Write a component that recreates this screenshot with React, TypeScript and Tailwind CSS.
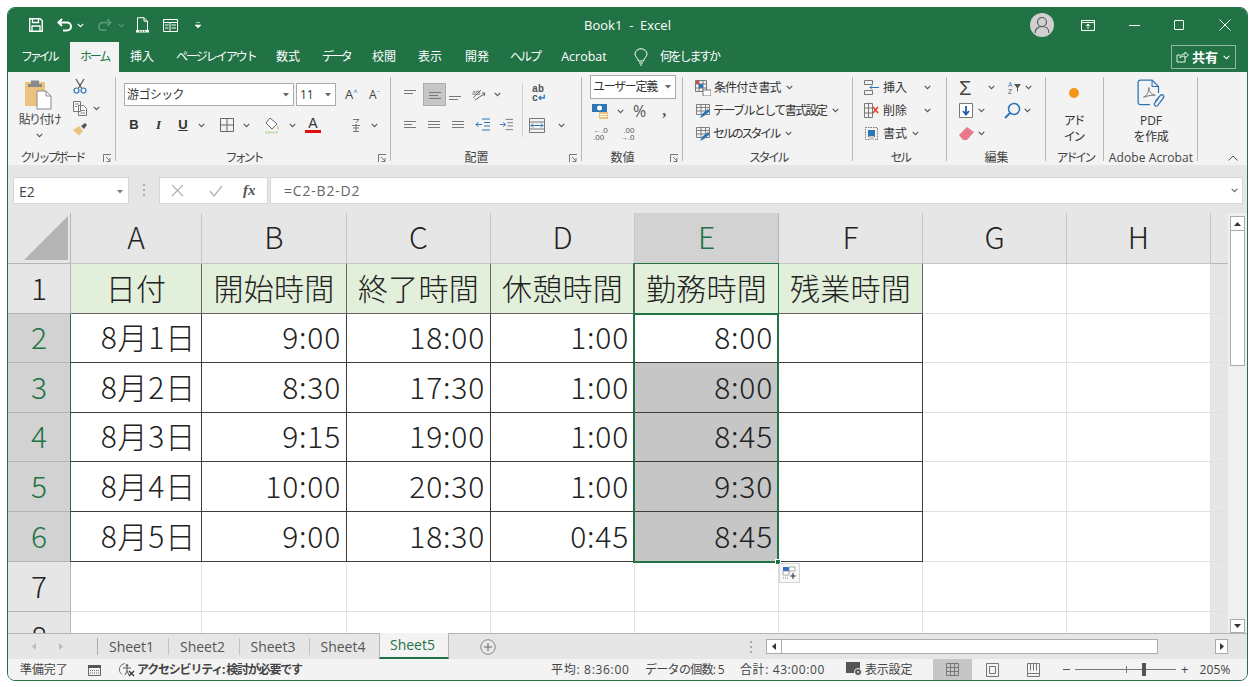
import type { ReactNode } from "react";

const Caret = ({ c = "#555", className = "" }: { c?: string; className?: string }) => (
  <svg width="7" height="5" viewBox="0 0 7 5" className={className}>
    <path d="M.7.8 3.5 3.6 6.3.8" fill="none" stroke={c} strokeWidth="1.1" />
  </svg>
);

const Launcher = () => (
  <svg width="9" height="9" viewBox="0 0 9 9">
    <path d="M.5 8V.5H8M3 3l4 4M7 4v3.5H3.5" fill="none" stroke="#777" strokeWidth="1" />
  </svg>
);

// small ribbon lines icon (alignment)
const Lines = ({ y, w = [12, 9, 12] }: { y: number[]; w?: number[] }) => (
  <svg width="14" height="14" viewBox="0 0 14 14">
    {y.map((v, i) => (
      <path key={i} d={`M1 ${v}.5h${w[i]}`} stroke="#777" strokeWidth="1" />
    ))}
  </svg>
);

const SheetIcon = ({ accent }: { accent: string }) => (
  <svg width="17" height="16" viewBox="0 0 17 16">
    <path d="M1.500 1.500h13v10h-13zM1.500 4.500h13M1.500 8h13M6 1.500v10M10.500 1.500v10" fill="none" stroke="#808080" />
    <path d="M5 15l2-4 6-5 2 2-6 5z" fill={accent} />
  </svg>
);

function Group({ w, label, launcher, track = "tracking-[-0.6px]", children }: { w: string; label: string; launcher?: boolean; track?: string; children: ReactNode }) {
  return (
    <div className={`${w} relative flex h-full shrink-0 flex-col`}>
      <div className="absolute right-0 top-[5px] h-[84px] w-px bg-[#b9b9b9]" />
      <div className="h-[76px] overflow-visible">{children}</div>
      <div className={`${track} ${launcher ? "pr-[20px]" : ""} relative mt-auto h-[17px] whitespace-nowrap text-center text-[12px] leading-[19px] text-[#444]`}>
        {label}
        {launcher && (
          <span className="absolute bottom-[2px] right-[4px] flex">
            <Launcher />
          </span>
        )}
      </div>
    </div>
  );
}

function Slot({ w, children }: { w: string; children: ReactNode }) {
  return <span className={`${w} flex shrink-0 items-center justify-center`}>{children}</span>;
}

const Sep = () => <span className="mx-[1px] h-[24px] w-px shrink-0 bg-[#c6c6c6]" />;

const tabs: [string, string][] = [
  ["挿入", "w-[24px] ml-[11px]"],
  ["ページレイアウト", "w-[78px] ml-[22px] tracking-[-2px]"],
  ["数式", "w-[24px] ml-[22px]"],
  ["データ", "w-[28px] ml-[22px] tracking-[-2.6px]"],
  ["校閲", "w-[24px] ml-[22px]"],
  ["表示", "w-[24px] ml-[22px]"],
  ["開発", "w-[24px] ml-[23px]"],
  ["ヘルプ", "w-[30px] ml-[21px] tracking-[-2px]"],
  ["Acrobat", "w-[46px] ml-[21px] text-[12.5px]"],
];

const rows = [
  ["8月1日", "9:00", "18:00", "1:00", "8:00"],
  ["8月2日", "8:30", "17:30", "1:00", "8:00"],
  ["8月3日", "9:15", "19:00", "1:00", "8:45"],
  ["8月4日", "10:00", "20:30", "1:00", "9:30"],
  ["8月5日", "9:00", "18:30", "0:45", "8:45"],
];

const colLabels = ["A", "B", "C", "D", "E", "F", "G", "H"];
const titles = ["日付", "開始時間", "終了時間", "休憩時間", "勤務時間", "残業時間"];

function Gridline() {
  return <div className="border-b border-r border-[#e1e1e1] bg-white" />;
}

function Sheet() {
  return (
    <div className="relative h-[420px] w-[1220px] shrink-0 overflow-hidden font-['Noto_Sans_CJK_JP',sans-serif] text-[30px] font-light leading-none text-[#222]">
      <div className="grid grid-cols-[63px_131px_145px_144px_144px_144px_144px_144px_144px_17px] grid-rows-[51px_50px_49px_50px_49px_50px_50px_50px_50px]">
        {/* column headers */}
        <div className="flex items-end justify-end border-b border-r border-[#b5b5b5] bg-[#e6e6e6] pb-[3px] pr-[2px]">
          <svg width="44" height="44" viewBox="0 0 44 44">
            <path d="M44 0v44H0z" fill="#b4b4b4" />
          </svg>
        </div>
        {colLabels.map((c) => (
          <div
            key={c}
            className={
              c === "E"
                ? "flex items-center justify-center border-b border-r border-[#b5b5b5] bg-[#d2d2d2] pb-[4px] text-[#217346]"
                : "flex items-center justify-center border-b border-r border-[#c6c6c6] bg-[#e6e6e6] pb-[4px]"
            }
          >
            {c}
          </div>
        ))}
        <div className="border-b border-[#b5b5b5] bg-[#e6e6e6]" />

        {/* row 1 */}
        <div className="flex items-center justify-center border-b border-r border-[#b5b5b5] bg-[#e6e6e6] pb-[4px]">1</div>
        {titles.map((t, i) => (
          <div
            key={t}
            className={
              i === 4
                ? "flex items-center justify-center border-b border-r border-[#217346] bg-[#e2efda] pb-[4px] tracking-[0.2px]"
                : "flex items-center justify-center border-b border-r border-[#666] bg-[#e2efda] pb-[4px] tracking-[0.2px]"
            }
          >
            {t}
          </div>
        ))}
        <Gridline />
        <Gridline />
        <div className="border-b border-[#e1e1e1]" />

        {/* rows 2-6 */}
        {rows.flatMap((r, ri) => [
          <div key={`h${ri}`} className="flex items-center justify-center border-b border-r border-[#b5b5b5] bg-[#d2d2d2] pb-[4px] text-[#217346]">
            {ri + 2}
          </div>,
          ...r.map((v, ci) => (
            <div
              key={`${ri}-${ci}`}
              className={
                ci === 4 && ri > 0
                  ? "flex items-center justify-end border-b border-r border-[#3c3c3c] bg-[#c6c6c6] pb-[4px] pr-[5px] tracking-[0.8px]"
                  : "flex items-center justify-end border-b border-r border-[#3c3c3c] bg-white pb-[4px] pr-[5px] tracking-[0.8px]"
              }
            >
              {v}
            </div>
          )),
          <div key={`f${ri}`} className="border-b border-r border-[#3c3c3c] bg-white" />,
          <Gridline key={`g${ri}`} />,
          <Gridline key={`i${ri}`} />,
          <div key={`j${ri}`} className="border-b border-[#e1e1e1]" />,
        ])}

        {/* rows 7, 8 */}
        {[7, 8].flatMap((n) => [
          <div key={`h${n}`} className="flex items-center justify-center border-b border-r border-[#b5b5b5] bg-[#e6e6e6] pb-[4px]">
            {n}
          </div>,
          ...Array.from({ length: 8 }, (_, i) => <Gridline key={`${n}-${i}`} />),
          <div key={`l${n}`} className="border-b border-[#e1e1e1]" />,
        ])}
      </div>

      {/* left edge of the filled area */}
      <div className="pointer-events-none absolute left-[62px] top-[101px] h-[248px] w-[1px] bg-[#217346]" />
      {/* selection E2:E6 */}
      <div className="pointer-events-none absolute left-[625px] top-[100px] h-[250px] w-[146px] border-2 border-[#217346]" />
      <div className="pointer-events-none absolute left-[625px] top-[50px] h-[51px] w-[146px] border-x border-t border-[#217346]" />
      <div className="absolute left-[767px] top-[346px] h-[6px] w-[6px] border border-white bg-[#217346]" />
      {/* quick analysis */}
      <div className="absolute left-[771px] top-[350px] flex h-[20px] w-[21px] items-center justify-center border border-[#d4d4d4] bg-[#f8f8f8]">
        <svg width="15" height="14" viewBox="0 0 15 14">
          <path d="M1 1h6v4H1z" fill="#2f6fd0" />
          <path d="M7 1h6v4H7zM1 5h6v4H1z" fill="#fff" stroke="#888" strokeWidth=".7" />
          <path d="M1 12h5" stroke="#888" strokeDasharray="1 1" />
          <path d="M11 7v6M8.500 10h5" stroke="#555" strokeWidth="1.300" />
        </svg>
      </div>
    </div>
  );
}

export default function App() {
  return (
    <div className="h-[687px] w-[1255px] overflow-hidden bg-white p-[7px] font-['Open_Sans','Noto_Sans_CJK_JP',sans-serif] text-[#444]">
      <div className="flex h-[674px] w-[1241px] flex-col overflow-hidden rounded-lg border border-[#217346] bg-[#e6e6e6]">
        {/* title bar */}
        <div className="grid h-[34px] shrink-0 grid-cols-[1fr_auto_1fr] items-center bg-[#217346] text-white">
          <div className="flex items-center pl-[21px]">
            <svg width="14" height="14" viewBox="0 0 14 14">
              <path d="M.7.7h10.500l2.100 2.100v10.500H.7z" fill="none" stroke="#fff" strokeWidth="1.400" />
              <path d="M3.500 1v3.500h6V1M3 13V8h8v5" fill="none" stroke="#fff" strokeWidth="1.300" />
            </svg>
            <svg width="16" height="14" viewBox="0 0 16 14" className="ml-[14px]">
              <path d="M1.500 4.500H10a4 4 0 0 1 0 8H6M5 1 1.500 4.500 5 8" fill="none" stroke="#fff" strokeWidth="2" />
            </svg>
            <Caret c="#fff" className="ml-[4px]" />
            <svg width="15" height="14" viewBox="0 0 16 14" className="ml-[13px]">
              <path d="M14.500 4.500H6a4 4 0 0 0 0 8h4M11 1l3.500 3.500L11 8" fill="none" stroke="#5a9678" strokeWidth="2" />
            </svg>
            <Caret c="#5a9678" className="ml-[6px]" />
            <svg width="13" height="16" viewBox="0 0 13 16" className="ml-[11px]">
              <path d="M1.500 13V.7h6.500l3.500 3.500V13M8 .7v3.500h3.500" fill="none" stroke="#fff" />
              <path d="M0 13h13v2.500H0z" fill="#fff" />
              <path d="M3 14.200h7" stroke="#217346" strokeDasharray="1.500 1" />
            </svg>
            <svg width="15" height="13" viewBox="0 0 15 13" className="ml-[14px]">
              <path d="M.5.500h14v12H.5zM.5 3.500h14M7 3.500v9M2 6h3.500M2 9h3.500M8.500 6h4.500M8.500 9h4.500" fill="none" stroke="#fff" />
            </svg>
            <svg width="6" height="7" viewBox="0 0 6 7" className="ml-[17px]">
              <path d="M1 .5h4M0 3l3 3 3-3z" fill="#fff" stroke="#fff" strokeWidth=".6" />
            </svg>
          </div>
          <div className="text-[13px] leading-none">Book1&nbsp; -&nbsp; Excel</div>
          <div className="flex items-center justify-end">
            <div className="flex h-[24px] w-[24px] items-center justify-center rounded-full bg-[#d0d0d0]">
              <svg width="16" height="18" viewBox="0 0 16 18">
                <circle cx="8" cy="6" r="4.500" fill="none" stroke="#555" strokeWidth="1.100" />
                <path d="M1 17c0-4 3-6.500 7-6.500s7 2.500 7 6.500" fill="none" stroke="#555" strokeWidth="1.100" />
              </svg>
            </div>
            <svg width="14" height="11" viewBox="0 0 14 11" className="ml-[27px]">
              <path d="M.5.500h13v10H.5zM.5 2.500h13M7 9V4.500M5 6l2-2 2 2" fill="none" stroke="#fff" />
            </svg>
            <div className="ml-[34px] h-px w-[11px] bg-white" />
            <div className="ml-[34px] h-[10px] w-[10px] rounded-[1px] border border-white" />
            <svg width="12" height="12" viewBox="0 0 12 12" className="ml-[35px] mr-[16px]">
              <path d="M.5.500l11 11M11.500.500l-11 11" stroke="#fff" />
            </svg>
          </div>
        </div>

        {/* ribbon tabs */}
        <div className="flex h-[30px] shrink-0 items-center bg-[#217346] text-[12px] leading-none text-white">
          <span className="ml-[13px] w-[34px] whitespace-nowrap text-center tracking-[-3.2px]">ファイル</span>
          <span className="ml-[15px] flex h-full w-[49px] items-center justify-center bg-[#f3f3f3] tracking-[-2.2px] text-[#217346]">ホーム</span>
          {tabs.map(([t, c]) => (
            <span key={t} className={`${c} whitespace-nowrap text-center`}>
              {t}
            </span>
          ))}
          <svg width="14" height="18" viewBox="0 0 14 18" className="ml-[27px]">
            <path d="M4.500 13C4 10 1 9 1 5.800A5.800 5.800 0 0 1 7 .8a5.800 5.800 0 0 1 6 5c0 3.200-3 4.200-3.500 7.200zM5 15h4M6 17h2" fill="none" stroke="#fff" />
          </svg>
          <span className="ml-[12px] whitespace-nowrap tracking-[-2.2px]">何をしますか</span>
          <div className="ml-auto mr-[11px] flex h-[24px] w-[65px] items-center border border-[#8fb9a3] pl-[4px]">
            <svg width="13" height="12" viewBox="0 0 13 12">
              <path d="M9 6.500V11H1V4h3M4 7c0-3 2-4 5-4V1l3.500 3L9 7V5C7 5 5 5.500 4 7z" fill="none" stroke="#fff" strokeWidth=".9" />
            </svg>
            <span className="ml-[3px] text-[13px] font-bold">共有</span>
            <Caret c="#fff" className="ml-[5px]" />
          </div>
        </div>

        {/* ribbon */}
        <div className="flex h-[93px] shrink-0 bg-[#f3f3f3]">
          <Group w="w-[108px]" label="クリップボード" launcher track="tracking-[-3px]">
            <div className="flex">
              <div className="flex w-[63px] flex-col items-center pt-[7px]">
                <svg width="28" height="31" viewBox="0 0 28 31" className="ml-[-4px]">
                  <path d="M1 3h20v24H1z" fill="#ecc27f" />
                  <path d="M7 1.500h8V5h3v3H4V5h3z" fill="#8a8a8a" />
                  <path d="M13 12h9l5 5v13H13z" fill="#fff" stroke="#8a8a8a" />
                  <path d="M22 12v5h5" fill="none" stroke="#8a8a8a" />
                </svg>
                <span className="mt-[1px] whitespace-nowrap text-[12px] leading-[18px] tracking-[-1.6px]">貼り付け</span>
                <Caret className="mt-[4px]" />
              </div>
              <div className="flex flex-col items-center pt-[6px]">
                <svg width="14" height="16" viewBox="0 0 14 16">
                  <path d="M3 1l5.500 9M11 1 5.500 10" stroke="#555" strokeWidth="1.200" />
                  <circle cx="3.500" cy="12.500" r="2.500" fill="none" stroke="#2e75b6" strokeWidth="1.200" />
                  <circle cx="10.500" cy="12.500" r="2.500" fill="none" stroke="#2e75b6" strokeWidth="1.200" />
                </svg>
                <div className="relative mt-[7px] flex w-[14px]">
                  <svg width="14" height="15" viewBox="0 0 14 15">
                    <path d="M.5.500h7v10h-7zM5.500 4.500h5l3 3v7h-8z" fill="#f8f8f8" stroke="#777" />
                    <path d="M2 3h4M2 5.500h2M7.500 9.500h4.500M7.500 12h4.500" stroke="#888" />
                  </svg>
                  <Caret className="absolute left-[20px] top-[5px]" />
                </div>
                <svg width="15" height="14" viewBox="0 0 15 14" className="ml-[2px] mt-[6px]">
                  <path d="M0 8l6-4 4 5-4 4.500z" fill="#ecc27f" />
                  <path d="M8 4l4-3 2 2-3 4z" fill="#555" />
                </svg>
              </div>
            </div>
          </Group>

          <Group w="w-[275px]" label="フォント" launcher track="tracking-[-3px]">
            <div className="flex items-center pl-[8px] pt-[11px]">
              <div className="flex h-[23px] w-[170px] items-center border border-[#ababab] bg-white pl-[2px] text-[12px] tracking-[-0.6px] text-[#333]">
                游ゴシック
                <svg width="6" height="4" viewBox="0 0 6 4" className="ml-auto mr-[4px]">
                  <path d="M0 0h6L3 3.500z" fill="#666" />
                </svg>
              </div>
              <div className="ml-[2px] flex h-[23px] w-[40px] items-center border border-[#ababab] bg-white pl-[3px] text-[12px] text-[#333]">
                11
                <svg width="6" height="4" viewBox="0 0 6 4" className="ml-auto mr-[4px]">
                  <path d="M0 0h6L3 3.500z" fill="#666" />
                </svg>
              </div>
              <span className="ml-[8px] flex w-[15px] justify-center text-[13px] leading-none">
                A<span className="text-[8px] text-[#2e75b6]">^</span>
              </span>
              <span className="ml-[8px] flex w-[15px] justify-center text-[12px] leading-none">
                A<span className="text-[8px] text-[#2e75b6]">ˇ</span>
              </span>
            </div>
            <div className="mt-[7px] flex h-[24px] items-center pl-[6px] text-[13px] text-[#333]">
              <Slot w="w-[24px]"><b className="font-['Liberation_Sans']">B</b></Slot>
              <Slot w="w-[25px]"><i className="font-['Liberation_Serif'] font-bold">I</i></Slot>
              <Slot w="w-[24px]"><b className="font-['Liberation_Sans'] underline">U</b></Slot>
              <Slot w="w-[12px]"><Caret /></Slot>
              <span className="ml-[4px]"><Sep /></span>
              <Slot w="w-[28px]">
                <svg width="14" height="14" viewBox="0 0 14 14">
                  <path d="M.5.500h13v13H.5zM7 .5v13M.5 7h13" fill="none" stroke="#666" />
                </svg>
              </Slot>
              <Slot w="w-[10px]"><Caret /></Slot>
              <span className="ml-[2px]"><Sep /></span>
              <Slot w="w-[33px]">
                <svg width="16" height="17" viewBox="0 0 16 17">
                  <path d="M6 1l7 6-5 5-6-6z" fill="#fff" stroke="#666" />
                  <path d="M13 8c1 1.500 2 2.500 2 3.500s-2 1-2 0z" fill="#ecc27f" />
                  <path d="M1 15.500h13" stroke="#c6dfb8" strokeWidth="2" />
                </svg>
              </Slot>
              <Slot w="w-[8px]"><Caret /></Slot>
              <Slot w="w-[34px]">
                <span className="flex flex-col items-center font-['Liberation_Sans'] text-[14px] leading-[13px]">
                  A<span className="h-[3px] w-[16px] bg-[#e01010]" />
                </span>
              </Slot>
              <Slot w="w-[1px]"><Caret /></Slot>
              <span className="ml-[9px]"><Sep /></span>
              <Slot w="w-[28px]">
                <svg width="10" height="15" viewBox="0 0 10 15">
                  <path d="M2 1.500h6L5 5M1 7.500h8M5 6v8M2 10h6M2 13.500h6" fill="none" stroke="#666" strokeWidth=".9" />
                </svg>
              </Slot>
              <Slot w="w-[8px]"><Caret /></Slot>
            </div>
          </Group>

          <Group w="w-[191px]" label="配置" launcher track="tracking-[0px]">
            <div className="flex">
              <div className="w-[131px]">
                <div className="mt-[11px] flex h-[23px] items-center pl-[11px]">
                  <Slot w="w-[16px]"><Lines y={[2, 5]} /></Slot>
                  <span className="ml-[5px] flex h-[23px] w-[23px] items-center justify-center border border-[#ababab] bg-[#c6c6c6]"><Lines y={[4, 7, 10]} /></span>
                  <Slot w="w-[18px]"><Lines y={[8, 11]} /></Slot>
                  <Slot w="w-[30px]">
                    <svg width="16" height="14" viewBox="0 0 16 14">
                      <path d="M2 10 10 2" stroke="#777" strokeWidth="1" />
                      <text x="1" y="7" fontSize="7" fill="#666">ab</text>
                      <path d="M4 12l9-6M11 5l3 0-1 3" fill="none" stroke="#666" />
                    </svg>
                  </Slot>
                  <Caret />
                </div>
                <div className="mt-[7px] flex h-[24px] items-center pl-[12px]">
                  <Slot w="w-[14px]"><Lines y={[3, 6, 9]} w={[12, 8, 12]} /></Slot>
                  <Slot w="w-[34px]"><Lines y={[3, 6, 9]} w={[12, 12, 12]} /></Slot>
                  <Slot w="w-[14px]"><Lines y={[3, 6, 9]} w={[12, 12, 12]} /></Slot>
                  <Slot w="w-[34px]">
                    <svg width="15" height="14" viewBox="0 0 15 14">
                      <path d="M7 1h8M9 4.500h6M9 8h6M7 12h8M1 6.500h6M3.500 4 1 6.500 3.500 9" fill="none" stroke="#2e75b6" />
                    </svg>
                  </Slot>
                  <Slot w="w-[14px]">
                    <svg width="15" height="14" viewBox="0 0 15 14">
                      <path d="M7 1h8M9 4.500h6M9 8h6M7 12h8" fill="none" stroke="#777" />
                      <path d="M1 6.500h6M4.500 4 7 6.500 4.500 9" fill="none" stroke="#2e75b6" />
                    </svg>
                  </Slot>
                </div>
              </div>
              <div className="mt-[11px] h-[54px] w-px bg-[#d0d0d0]" />
              <div className="flex w-[57px] flex-col pl-[6px]">
                <span className="ml-[3px] mt-[13px] font-['Liberation_Mono'] text-[10px] font-bold leading-[9px] text-[#555]">
                  ab
                  <br />
                  c<span className="text-[#2e75b6]">↵</span>
                </span>
                <div className="mt-[15px] flex items-center">
                  <svg width="16" height="15" viewBox="0 0 16 15">
                    <path d="M.5.500h15v14H.5zM.5 4h15M.5 11h15" fill="none" stroke="#777" />
                    <path d="M2 7.500h12M4 5.500l-2 2 2 2M12 5.500l2 2-2 2" fill="none" stroke="#2e75b6" />
                  </svg>
                  <Caret className="ml-[13px]" />
                </div>
              </div>
            </div>
          </Group>

          <Group w="w-[101px]" label="数値" launcher track="tracking-[0px]">
            <div className="ml-[8px] mt-[3px] flex h-[24px] w-[86px] items-center whitespace-nowrap border border-[#ababab] bg-white pl-[2px] text-[12px] tracking-[-1.3px] text-[#333]">
              ユーザー定義
              <svg width="6" height="4" viewBox="0 0 6 4" className="ml-auto mr-[4px]">
                <path d="M0 0h6L3 3.500z" fill="#666" />
              </svg>
            </div>
            <div className="mt-[1px] flex h-[22px] items-center pl-[10px]">
              <svg width="16" height="16" viewBox="0 0 16 16">
                <path d="M0 1h15v8H0z" fill="#2e75b6" />
                <circle cx="7.500" cy="5" r="2.500" fill="#fff" />
                <path d="M7 9h9v7H7z" fill="#ecc27f" />
                <path d="M8 11.500h7M8 13.500h7" stroke="#fff" />
              </svg>
              <Caret className="ml-[9px]" />
              <span className="ml-[9px] text-[16px] leading-none text-[#555]">%</span>
              <b className="ml-[16px] font-['Liberation_Serif'] text-[16px] leading-none text-[#555]">,</b>
            </div>
            <div className="mt-[1px] flex h-[22px] items-center pl-[11px] font-['Liberation_Sans'] text-[8px] leading-[7px] text-[#555]">
              <span><span className="text-[#2e75b6]">←</span>.0<br />.00</span>
              <span className="ml-[12px] text-right">.00<br /><span className="text-[#2e75b6]">→</span>.0</span>
            </div>
          </Group>

          <Group w="w-[170px]" label="スタイル" track="tracking-[-2.5px]">
            <div className="flex flex-col pl-[12px] pt-[4px] text-[12px] text-[#333]">
              <div className="flex h-[23px] items-center">
                <svg width="16" height="16" viewBox="0 0 16 16">
                  <path d="M.5.500h11v11H.5zM4 .5v11M8 .5v11M.5 4h11M.5 8h11" fill="none" stroke="#777" />
                  <path d="M1 1h3v3H1z" fill="#e04040" />
                  <path d="M4 4h4v4H4z" fill="#2e75b6" />
                  <path d="M8 10h8v6H8z" fill="#fff" stroke="#777" />
                </svg>
                <span className="ml-[3px] tracking-[-0.9px]">条件付き書式</span>
                <Caret className="ml-[5px]" />
              </div>
              <div className="flex h-[23px] items-center">
                <SheetIcon accent="#2e75b6" />
                <span className="ml-[1px] whitespace-nowrap tracking-[-1.6px]">テーブルとして書式設定</span>
                <Caret className="ml-[6px]" />
              </div>
              <div className="flex h-[23px] items-center">
                <SheetIcon accent="#2e75b6" />
                <span className="ml-[1px] tracking-[-2.6px]">セルのスタイル</span>
                <Caret className="ml-[6px]" />
              </div>
            </div>
          </Group>

          <Group w="w-[94px]" label="セル" track="tracking-[-2.5px]">
            <div className="flex flex-col pl-[11px] pt-[4px] text-[12px] tracking-[-0.1px] text-[#333]">
              <div className="flex h-[23px] items-center">
                <svg width="15" height="15" viewBox="0 0 15 15">
                  <path d="M.5.500h8v4h-8zM.5 10.500h8v4h-8z" fill="none" stroke="#777" />
                  <path d="M15 7.500H6M8 5.500l-2 2 2 2" fill="none" stroke="#2e75b6" />
                </svg>
                <span className="ml-[4px]">挿入</span>
                <Caret className="ml-[17px]" />
              </div>
              <div className="flex h-[23px] items-center">
                <svg width="15" height="15" viewBox="0 0 15 15">
                  <path d="M.5.500h8v14h-8zM.5 5h8M.5 10h8M4.500.5v14" fill="none" stroke="#777" />
                  <path d="M9 4l5 6M14 4l-5 6" stroke="#e04020" strokeWidth="1.500" />
                </svg>
                <span className="ml-[4px]">削除</span>
                <Caret className="ml-[17px]" />
              </div>
              <div className="flex h-[23px] items-center">
                <svg width="15" height="15" viewBox="0 0 15 15">
                  <path d="M1.500 1.500h12v12h-12z" fill="none" stroke="#777" strokeDasharray="1.500 1" />
                  <path d="M4 4h7v7H4z" fill="#2e75b6" />
                  <path d="M5 10h5v4H5z" fill="#ccc" />
                </svg>
                <span className="ml-[4px]">書式</span>
                <Caret className="ml-[5px]" />
              </div>
            </div>
          </Group>

          <Group w="w-[99px]" label="編集" track="tracking-[0px]">
            <div className="flex flex-col pl-[12px] pt-[4px]">
              <div className="flex h-[23px] items-center">
                <span className="w-[14px] font-['Liberation_Sans'] text-[20px] leading-none text-[#444]">Σ</span>
                <Caret className="ml-[15px]" />
                <svg width="14" height="15" viewBox="0 0 14 15" className="ml-[13px]">
                  <text x="0" y="7" fontSize="7" fill="#2e75b6">A</text>
                  <text x="0" y="14" fontSize="7" fill="#555">Z</text>
                  <path d="M6 4h7l-3 4v4l-1-1V8z" fill="#555" />
                </svg>
                <Caret className="ml-[3px]" />
              </div>
              <div className="flex h-[23px] items-center">
                <svg width="14" height="15" viewBox="0 0 14 15">
                  <path d="M.5.500h13v14H.5z" fill="#fff" stroke="#777" />
                  <path d="M7 3v8M4 8l3 3.500L10 8" fill="none" stroke="#1f5fa8" strokeWidth="1.800" />
                </svg>
                <Caret className="ml-[5px]" />
                <svg width="17" height="17" viewBox="0 0 17 17" className="ml-[19px]">
                  <circle cx="10" cy="7" r="5.500" fill="none" stroke="#2e75b6" strokeWidth="1.500" />
                  <path d="M6 11 1 16" stroke="#2e75b6" strokeWidth="2" />
                </svg>
                <Caret className="ml-[3px]" />
              </div>
              <div className="flex h-[23px] items-center">
                <svg width="15" height="13" viewBox="0 0 15 13">
                  <path d="M0 8l8-8 7 5-7 8H4z" fill="#e8788c" />
                </svg>
                <Caret className="ml-[4px]" />
              </div>
            </div>
          </Group>

          <Group w="w-[58px]" label="アドイン" track="tracking-[-2.8px]">
            <div className="flex flex-col items-center pr-[3px] pt-[16px] text-[12px] leading-[16px] tracking-[-2.2px] text-[#333]">
              <span className="h-[10px] w-[10px] rounded-full bg-[#f7941d]" />
              <span className="mt-[15px]">アド</span>
              <span>イン</span>
            </div>
          </Group>

          <Group w="w-[94px]" label="Adobe Acrobat" track="tracking-[0.1px]">
            <div className="flex flex-col items-center pt-[7px] text-[12px] leading-[16px] text-[#333]">
              <svg width="28" height="30" viewBox="0 0 26 28">
                <path d="M12 24H3a2 2 0 0 1-2-2V3a2 2 0 0 1 2-2h11l6 6v6" fill="none" stroke="#2e75b6" strokeWidth="1.200" />
                <path d="M14 1v6h6" fill="none" stroke="#2e75b6" strokeWidth="1" />
                <path d="M6 17c3-1 5-5 5-9 0 4 3 7 6 7-4 0-8 1-11 2z" fill="none" stroke="#777" strokeWidth=".9" />
                <path d="M17 21l5-6a2 2 0 0 1 3 2l-6 8a2 2 0 0 1-3-2l4-5" fill="none" stroke="#2e75b6" strokeWidth="1.200" />
              </svg>
              <span className="mt-[4px]">PDF</span>
              <span className="tracking-[-0.4px]">を作成</span>
            </div>
          </Group>

          <div className="flex flex-1 items-end justify-end pb-[4px] pr-[9px]">
            <svg width="10" height="6" viewBox="0 0 10 6">
              <path d="M.5 5.500 5 1l4.500 4.500" fill="none" stroke="#555" />
            </svg>
          </div>
        </div>

        {/* formula bar */}
        <div className="flex h-[48px] shrink-0 items-start bg-[#e6e6e6] pl-[5px] pr-[4px] pt-[12px] text-[14px]">
          <div className="flex h-[27px] w-[116px] items-center border border-[#d6d6d6] bg-white pl-[5px] pt-[2px] text-[#444]">
            E2
            <svg width="6" height="4" viewBox="0 0 6 4" className="ml-auto mr-[5px]">
              <path d="M0 0h6L3 3.500z" fill="#777" />
            </svg>
          </div>
          <div className="ml-[14px] mt-[7px] flex h-[12px] w-[3px] flex-col justify-between">
            <span className="h-[2px] w-[2px] bg-[#aaa]" />
            <span className="h-[2px] w-[2px] bg-[#aaa]" />
            <span className="h-[2px] w-[2px] bg-[#aaa]" />
          </div>
          <div className="ml-[13px] flex h-[27px] w-[109px] items-center border border-[#d6d6d6] bg-white">
            <svg width="13" height="13" viewBox="0 0 13 13" className="ml-[11px]">
              <path d="M1 1l11 11M12 1 1 12" stroke="#b5b5b5" strokeWidth="1.300" />
            </svg>
            <svg width="14" height="12" viewBox="0 0 14 12" className="ml-[25px]">
              <path d="M1 6l4 5 8-10" fill="none" stroke="#b5b5b5" strokeWidth="1.300" />
            </svg>
            <i className="ml-[20px] font-['Liberation_Serif'] text-[15px] font-bold leading-none text-[#555]">fx</i>
          </div>
          <div className="ml-[2px] flex h-[27px] flex-1 items-center border border-[#d6d6d6] bg-white pl-[13px] tracking-[0.8px] text-[#666]">
            =C2-B2-D2
            <Caret c="#666" className="ml-auto mr-[4px]" />
          </div>
        </div>

        {/* sheet + vertical scrollbar */}
        <div className="flex h-[420px] shrink-0 bg-[#e6e6e6]">
          <Sheet />
          <div className="flex w-[19px] flex-col bg-[#f0f0f0] pl-[2px] pt-[3px]">
            <div className="flex h-[15px] w-[15px] items-center justify-center border border-[#ababab] bg-white">
              <svg width="7" height="4" viewBox="0 0 7 4"><path d="M3.500 0 7 4H0z" fill="#333" /></svg>
            </div>
            <div className="h-[135px] w-[15px] border-x border-b border-[#ababab] bg-white" />
            <div className="mt-auto flex h-[14px] w-[15px] items-center justify-center border border-[#ababab] bg-white">
              <svg width="7" height="4" viewBox="0 0 7 4"><path d="M0 0h7L3.500 4z" fill="#333" /></svg>
            </div>
          </div>
        </div>

        {/* sheet tabs */}
        <div className="flex h-[26px] shrink-0 items-center border-t border-[#b5b5b5] bg-[#e6e6e6] text-[14px] text-[#555]">
          <svg width="5" height="7" viewBox="0 0 5 7" className="ml-[24px]"><path d="M4 0v7L0 3.500z" fill="#bbb" /></svg>
          <svg width="5" height="7" viewBox="0 0 5 7" className="ml-[21px]"><path d="M1 0v7l4-3.500z" fill="#bbb" /></svg>
          <span className="ml-[34px] h-[17px] w-px bg-[#aaa]" />
          {["Sheet1", "Sheet2", "Sheet3", "Sheet4"].map((s, i) => (
            <span key={s} className="flex items-center">
              <span className={i < 2 ? "w-[70px] pr-[3px] text-center leading-none" : "w-[69px] pr-[3px] text-center leading-none"}>{s}</span>
              {i < 3 && <span className="h-[17px] w-px bg-[#c2c2c2]" />}
            </span>
          ))}
          <span className="mt-[-1px] flex h-[26px] w-[70px] items-center justify-center border-x border-b-2 border-[#b5b5b5] border-b-[#217346] bg-[#f3f3f3] pr-[3px] leading-none text-[#217346]">
            Sheet5
          </span>
          <svg width="16" height="16" viewBox="0 0 16 16" className="ml-[31px]">
            <circle cx="8" cy="8" r="7.300" fill="none" stroke="#888" />
            <path d="M8 4v8M4 8h8" stroke="#666" />
          </svg>
          <div className="ml-[254px] flex h-[12px] w-[2px] flex-col justify-between">
            <span className="h-[2px] w-[2px] bg-[#aaa]" />
            <span className="h-[2px] w-[2px] bg-[#aaa]" />
            <span className="h-[2px] w-[2px] bg-[#aaa]" />
          </div>
          <div className="ml-[14px] flex h-[15px] w-[16px] items-center justify-center border border-[#ababab] bg-white">
            <svg width="4" height="7" viewBox="0 0 4 7"><path d="M4 0v7L0 3.500z" fill="#333" /></svg>
          </div>
          <div className="h-[15px] w-[376px] border-y border-r border-[#ababab] bg-white" />
          <div className="ml-[57px] flex h-[15px] w-[13px] items-center justify-center border border-[#ababab] bg-white">
            <svg width="4" height="7" viewBox="0 0 4 7"><path d="M0 0v7l4-3.500z" fill="#333" /></svg>
          </div>
        </div>

        {/* status bar */}
        <div className="flex h-[21px] shrink-0 items-center whitespace-nowrap bg-[#f3f3f3] text-[12px] leading-none text-[#444]">
          <span className="ml-[12px] w-[48px] tracking-[-0.1px]">準備完了</span>
          <svg width="13" height="12" viewBox="0 0 13 12" className="ml-[20px]">
            <path d="M.5 2.500h12v9H.5z" fill="none" stroke="#666" />
            <path d="M0 1h13v3H0z" fill="#555" />
            <path d="M2 6.500h9M2 9h9" stroke="#666" strokeDasharray="1 1" />
          </svg>
          <svg width="16" height="15" viewBox="0 0 16 15" className="ml-[18px]">
            <path d="M6 1.500a6 6 0 0 0-3 11" fill="none" stroke="#777" />
            <circle cx="8" cy="3.500" r="1.300" fill="#555" />
            <path d="M4 6l8 0M8 5v4M6 13l2-4 2 4" fill="none" stroke="#555" />
            <path d="M10 9l5 5M15 9l-5 5" stroke="#333" strokeWidth="1.200" />
          </svg>
          <b className="ml-[2px] w-[163px] tracking-[-1.2px]">アクセシビリティ: 検討が必要です</b>
          <span className="ml-[251px] w-[78px] tracking-[0.7px]">平均: 8:36:00</span>
          <span className="ml-[16px] w-[78px] tracking-[-0.7px]">データの個数: 5</span>
          <span className="ml-[17px] w-[85px] tracking-[0.6px]">合計: 43:00:00</span>
          <svg width="17" height="15" viewBox="0 0 17 15" className="ml-[21px]">
            <path d="M0 0h14v11H0z" fill="#555" />
            <circle cx="12" cy="10" r="3.500" fill="#555" stroke="#f3f3f3" />
            <circle cx="12" cy="10" r="1" fill="#f3f3f3" />
          </svg>
          <span className="ml-[2px] w-[46px] tracking-[-0.2px]">表示設定</span>
          <span className="ml-[22px] flex h-full w-[39px] items-center justify-center bg-[#c6c6c6]">
            <svg width="13" height="13" viewBox="0 0 13 13">
              <path d="M.5.500h12v12H.5zM4.500.5v12M8.500.5v12M.5 4.500h12M.5 8.500h12" fill="none" stroke="#777" />
            </svg>
          </span>
          <svg width="13" height="14" viewBox="0 0 13 14" className="ml-[14px]">
            <path d="M.5.500h12v13H.5zM3.500 3.500h6v7h-6z" fill="none" stroke="#777" />
          </svg>
          <svg width="13" height="14" viewBox="0 0 13 14" className="ml-[28px]">
            <path d="M.5.500h12v13H.5zM.5 10.500h12M6.500.5v7M3.500.5v7M9.500.5v7" fill="none" stroke="#777" />
          </svg>
          <div className="ml-[23px] h-px w-[7px] bg-[#555]" />
          <div className="relative ml-[5px] h-px w-[101px] bg-[#777]">
            <span className="absolute left-[51px] top-[-3px] h-[7px] w-px bg-[#777]" />
            <span className="absolute left-[67px] top-[-6px] h-[13px] w-[4px] bg-[#555]" />
          </div>
          <span className="ml-[5px] text-[13px]">+</span>
          <span className="ml-[11px] tracking-[0.2px]">205%</span>
        </div>
      </div>
    </div>
  );
}
